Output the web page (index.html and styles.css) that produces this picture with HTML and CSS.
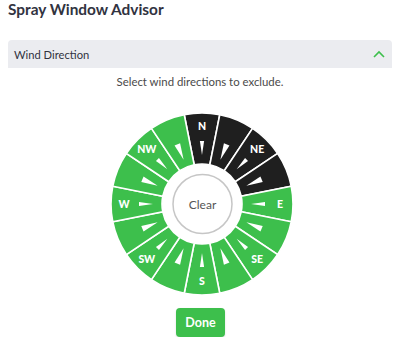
FILE: index.html
```html
<!DOCTYPE html>
<html>
<head>
<meta charset="utf-8">
<link rel="stylesheet" href="styles.css">
</head>
<body>
<h1 class="title">Spray Window Advisor</h1>
<div class="expander">
  <div class="exp-header">
    <span class="exp-label">Wind Direction</span>
    <svg class="chevron" width="12" height="8" viewBox="0 0 12 8"><path d="M1 7 L6 2 L11 7" fill="none" stroke="#3dbf4c" stroke-width="1.6"/></svg>
  </div>
  <p class="hint">Select wind directions to exclude.</p>
  <div class="wheel-wrap">
    <svg class="wheel" width="186" height="186" viewBox="-93 -93 186 186">
      <defs>
        <path id="sec" d="M -17.753 -89.252 A 91 91 0 0 1 17.753 -89.252 L 7.804 -39.232 A 40 40 0 0 0 -7.804 -39.232 Z" stroke="#fff" stroke-width="1.6"/>
        <path id="tm" d="M 0 -49 L 2.1 -63 L -2.1 -63 Z" fill="#fff"/>
        <path id="ti" d="M 0 -48 L 3 -64.5 L -3 -64.5 Z" fill="#fff"/>
      </defs>
      <g class="sectors">
        <use href="#sec" class="off" transform="rotate(0)"/>
        <use href="#sec" class="off" transform="rotate(22.5)"/>
        <use href="#sec" class="off" transform="rotate(45)"/>
        <use href="#sec" class="off" transform="rotate(67.5)"/>
        <use href="#sec" class="on" transform="rotate(90)"/>
        <use href="#sec" class="on" transform="rotate(112.5)"/>
        <use href="#sec" class="on" transform="rotate(135)"/>
        <use href="#sec" class="on" transform="rotate(157.5)"/>
        <use href="#sec" class="on" transform="rotate(180)"/>
        <use href="#sec" class="on" transform="rotate(202.5)"/>
        <use href="#sec" class="on" transform="rotate(225)"/>
        <use href="#sec" class="on" transform="rotate(247.5)"/>
        <use href="#sec" class="on" transform="rotate(270)"/>
        <use href="#sec" class="on" transform="rotate(292.5)"/>
        <use href="#sec" class="on" transform="rotate(315)"/>
        <use href="#sec" class="on" transform="rotate(337.5)"/>
      </g>
      <g class="ticks">
        <use href="#tm" transform="rotate(0)"/>
        <use href="#ti" transform="rotate(22.5)"/>
        <use href="#tm" transform="rotate(45)"/>
        <use href="#ti" transform="rotate(67.5)"/>
        <use href="#tm" transform="rotate(90)"/>
        <use href="#ti" transform="rotate(112.5)"/>
        <use href="#tm" transform="rotate(135)"/>
        <use href="#ti" transform="rotate(157.5)"/>
        <use href="#tm" transform="rotate(180)"/>
        <use href="#ti" transform="rotate(202.5)"/>
        <use href="#tm" transform="rotate(225)"/>
        <use href="#ti" transform="rotate(247.5)"/>
        <use href="#tm" transform="rotate(270)"/>
        <use href="#ti" transform="rotate(292.5)"/>
        <use href="#tm" transform="rotate(315)"/>
        <use href="#ti" transform="rotate(337.5)"/>
      </g>
      <g class="labels">
        <text x="0" y="-78">N</text>
        <text x="55.2" y="-55.2">NE</text>
        <text x="78" y="0">E</text>
        <text x="55.2" y="55.2">SE</text>
        <text x="0" y="77">S</text>
        <text x="-55.2" y="55.2">SW</text>
        <text x="-78" y="0">W</text>
        <text x="-55.2" y="-55.2">NW</text>
      </g>
      <circle class="clear-ring" cx="0.5" cy="0" r="29.5"/>
      <text class="clear-text" x="0.5" y="0">Clear</text>
    </svg>
  </div>
  <div class="actions">
    <button class="done">Done</button>
  </div>
</div>
</body>
</html>
```
FILE: styles.css
```css
html, body {
  margin: 0;
  padding: 0;
  background: #ffffff;
}
body {
  padding: 0 8px;
  font-family: "Lato", "Noto Sans", sans-serif;
  color: #31333f;
}
.title {
  margin: 0;
  padding-top: 0;
  font-size: 15.4px;
  line-height: 19px;
  font-weight: 700;
  color: #31333f;
}
.expander {
  margin-top: 21px;
}
.exp-header {
  height: 28px;
  background: #ebecf0;
  border-radius: 4px 4px 0 0;
  display: flex;
  align-items: center;
  justify-content: space-between;
  padding: 0 7px 0 6px;
}
.exp-label {
  font-size: 11.2px;
  color: #31333f;
}
.chevron {
  display: block;
  margin-top: -1px;
}
.hint {
  margin: 0;
  padding-top: 6px;
  text-align: center;
  font-size: 11.4px;
  line-height: 16px;
  color: #4a4a4a;
}
.wheel-wrap {
  display: flex;
  justify-content: center;
  padding-left: 3px;
  padding-top: 21px;
}
.wheel {
  display: block;
}
.sectors .on {
  fill: #3dbf4c;
}
.sectors .off {
  fill: #1f1f1f;
}
.labels text {
  fill: #ffffff;
  font-family: "Lato", "Noto Sans", sans-serif;
  font-weight: 900;
  font-size: 10.5px;
  text-anchor: middle;
  dominant-baseline: central;
}
.clear-ring {
  fill: #ffffff;
  stroke: #c6c6c6;
  stroke-width: 1.5;
}
.clear-text {
  fill: #555555;
  font-family: "Lato", "Noto Sans", sans-serif;
  font-size: 12px;
  text-anchor: middle;
  dominant-baseline: central;
}
.actions {
  display: flex;
  justify-content: center;
  padding-top: 11px;
  padding-left: 1px;
}
.done {
  width: 49px;
  height: 29px;
  border: none;
  border-radius: 4px;
  background: #3dbf4c;
  color: #ffffff;
  font-family: "Lato", "Noto Sans", sans-serif;
  font-size: 12.5px;
  font-weight: 700;
  padding: 0;
  box-shadow: 0 1px 2px rgba(0,0,0,0.15);
}
```
